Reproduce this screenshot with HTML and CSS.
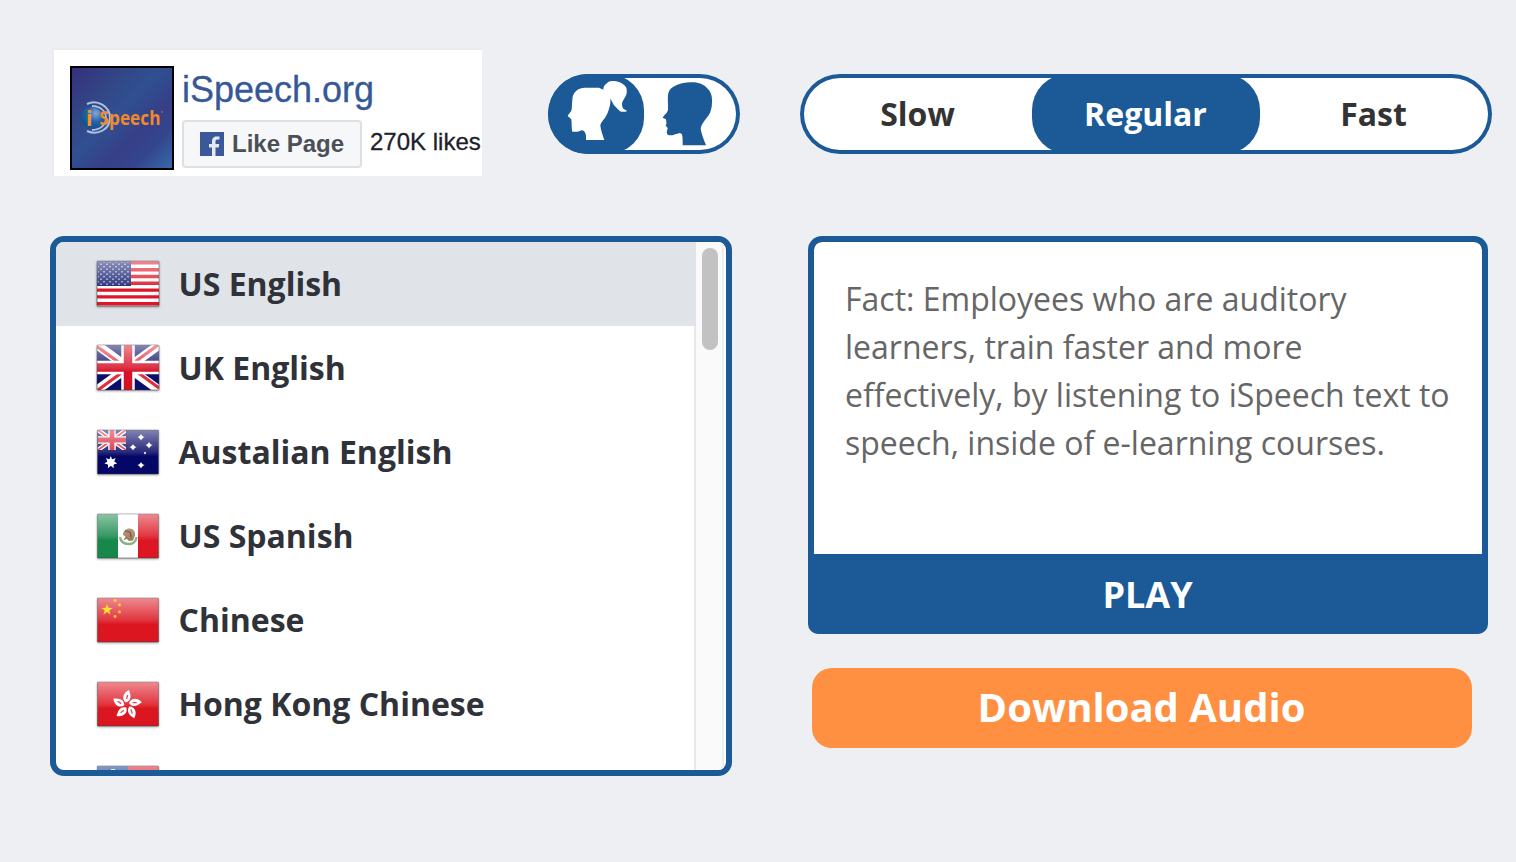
FILE: index.html
```html
<!DOCTYPE html>
<html lang="en">
<head>
<meta charset="utf-8">
<title>iSpeech text to speech</title>
<link rel="stylesheet" href="styles.css">
</head>
<body>
<svg class="defs" width="0" height="0" aria-hidden="true">
  <defs>
    <linearGradient id="gloss" x1="0" y1="0" x2="0" y2="1">
      <stop offset="0" stop-color="#fff" stop-opacity=".5"/>
      <stop offset=".5" stop-color="#fff" stop-opacity=".14"/>
      <stop offset=".6" stop-color="#fff" stop-opacity="0"/>
    </linearGradient>
    <pattern id="stars" width="6" height="5" patternUnits="userSpaceOnUse">
      <path d="M1 1h2v1.400h-2zM4 3.500h2v1.400h-2z" fill="#8a90c4"/>
    </pattern>
    <linearGradient id="rim" x1="0" y1="0" x2="0" y2="1">
      <stop offset="0" stop-color="#777" stop-opacity=".45"/>
      <stop offset="1" stop-color="#333" stop-opacity=".5"/>
    </linearGradient>
    <clipPath id="ukClip"><path d="M1 1h62v45H1z"/></clipPath>
    <clipPath id="auClip"><path d="M1.500 2h28.500v20H1.500z"/></clipPath>
    <linearGradient id="logoBg" x1="0" y1="0" x2="1" y2="1">
      <stop offset="0" stop-color="#35307c"/>
      <stop offset=".25" stop-color="#334585"/>
      <stop offset=".45" stop-color="#2f5091"/>
      <stop offset=".65" stop-color="#363f88"/>
      <stop offset=".8" stop-color="#34458d"/>
      <stop offset="1" stop-color="#3569aa"/>
    </linearGradient>
    <radialGradient id="ball" cx=".7" cy=".3" r=".8">
      <stop offset="0" stop-color="#8ba6d2"/>
      <stop offset=".5" stop-color="#1f64a9"/>
      <stop offset="1" stop-color="#124c8e"/>
    </radialGradient>
  </defs>
</svg>
<div class="page">
  <header class="top">
    <section class="like-box">
      <svg class="logo" viewBox="0 0 104 104">
        <rect width="104" height="104" fill="#000"/>
        <rect x="2" y="2" width="100" height="100" fill="url(#logoBg)"/>
        <g fill="none" stroke="#adc0dd" class="soft">
          <path d="M17 38c10-5 23 2 23 14 0 11-12 18-23 13" stroke-width="2"/>
          <path d="M22 40c8 0 14 5 14 12 0 7-6 12-14 12" stroke-width="1.800"/>
        </g>
        <ellipse cx="21.500" cy="51.500" rx="11" ry="10.500" fill="url(#ball)"/>
        <text class="logo-i" x="16" y="59.500">i</text>
        <text class="logo-word" x="29.500" y="59" textLength="61" lengthAdjust="spacingAndGlyphs">Speech</text>
        <circle cx="92" cy="46" r=".9" fill="#a8683f"/>
      </svg>
      <div class="like-info">
        <a class="like-title">iSpeech.org</a>
        <div class="like-row">
          <button class="like-button">
            <svg class="fb" viewBox="0 0 24 24"><path d="M0 0h24v24H0z" fill="#3b5998"/><path d="M12 24V15.500H9V12h3V9.500C12 6 14 4.500 16.500 4.500h3v3h-2c-1.500 0-2 .7-2 2V12h3.800l-.6 3.500h-3.200V24z" fill="#e3e8f3"/></svg>
            <span>Like Page</span>
          </button>
          <span class="like-count">270K likes</span>
        </div>
      </div>
    </section>
    <div class="toggle voice">
      <button class="seg active" aria-label="Female"><svg class="soft" viewBox="0 0 96 80"><path d="M24.300 26c0-4 1.700-7.500 4.400-9.500 2.300-2 5-2.800 8.300-2.800h14l4.300 2c0-2.500 1-4.500 2.700-5.700C60 8 61.500 7 63.700 7c4 0 7.500.5 10 2.300 3 2 5 3.500 5 6.500 0 2.500.3 4-1 6.200l-3.400 6c-.6 2.500-.3 4.700 1 6.700l4 2.300c-2.500 1-5 1.200-7.300.3L66 31.300l-3.700-6.800c.3 3.500 0 6.300-1 9.200-1 4-2.300 7-4.300 10-2 2.700-4.200 5-4.700 7.600.5 5 2.300 9.700 4 14.700H38c0-2 .2-4-.3-5.700-.7-2.700-2-4-4-4l-4 1.400h-5.400c-1-4-.3-8.400-1-12.400l-3.600-3.300c1-2.500 3.600-3.700 4-6.700z" fill="#fff"/></svg></button>
      <button class="seg" aria-label="Male"><svg class="soft" viewBox="0 0 96 80"><path d="M24 21c.5-4 2.300-6.500 5.300-8.300 5-3 12-4.400 18.400-4.400 6 0 11.500 1.700 15 5.400C66.500 17 68 21 68 25.500c.2 5-.3 9.200-2 13.200-3 6-8.500 10-9.300 16 .8 6 3.300 11 5.300 16.600H38.700c-.2-4 .2-7.500-.7-11l-2-1.300-5.500 1.500c-2.300 1-4.300 1-6.200.5-1-.7-1.500-1.700-1.600-3l1-4-2-2.300.8-2.400-.5-4-3.300-1.600c1.300-2.700 4.800-4.700 5.300-8.200.3-5-.5-10 0-14.500z" fill="#1b5a96"/></svg></button>
    </div>
    <div class="toggle speed">
      <button class="seg">Slow</button>
      <button class="seg active">Regular</button>
      <button class="seg">Fast</button>
    </div>
  </header>
  <main class="main">
    <div class="languages">
      <ul class="list">
        <li class="item selected">
          <svg class="flag" viewBox="0 0 64 48"><path d="M1 1h62v45H1z" fill="#fff"/><path d="M1 2.800h62M1 9.700h62M1 16.500h62M1 23.300h62M1 30.100h62M1 36.900h62M1 43.700h62" stroke="#e01527" stroke-width="3.400"/><path d="M1 1h34v25H1z" fill="#1b2473"/><path d="M2 2h32v23H2z" fill="url(#stars)"/><path d="M1 1h62v45H1z" fill="url(#gloss)"/><rect class="rim" x="1" y="1" width="62" height="45" rx="1"/></svg>
          <span>US English</span>
        </li>
        <li class="item">
          <svg class="flag" viewBox="0 0 64 48"><g clip-path="url(#ukClip)"><path d="M1 1h62v45H1z" fill="#0b0f69"/><path d="M1 1l62 45M63 1L1 46" stroke="#fff" stroke-width="9"/><path d="M1 2.500L30 23.500M62 1L34 21.500M2 46l28-20.500M63 44L35 23.500" stroke="#e0303f" stroke-width="3.200"/><path d="M32 1v45M1 23.500h62" stroke="#fff" stroke-width="13.500"/><path d="M32 1v45M1 23.500h62" stroke="#d61228" stroke-width="8.500"/><path d="M1 1h62v45H1z" fill="url(#gloss)"/></g><rect class="rim" x="1" y="1" width="62" height="45" rx="1"/></svg>
          <span>UK English</span>
        </li>
        <li class="item">
          <svg class="flag" viewBox="0 0 64 48"><path d="M1.500 2h61v44h-61z" fill="#050767"/><g clip-path="url(#auClip)"><path d="M2 2l28 20M30 2L2 22" stroke="#fff" stroke-width="4.500"/><path d="M2 2l28 20M30 2L2 22" stroke="#dc2638" stroke-width="1.800"/><path d="M16 2v20M2 12h28" stroke="#fff" stroke-width="7.500"/><path d="M16 2v20M2 12h28" stroke="#d81f34" stroke-width="4.800"/></g><g fill="#fff"><path d="M14.800 28l1.400 3.400 3.500-1.300-1.500 3.300 3 2.100-3.700.9.200 3.800-2.900-2.400-2.900 2.400.2-3.800-3.700-.9 3-2.100-1.500-3.300 3.500 1.300z"/><circle cx="14.800" cy="34.500" r="3.400"/><path d="M45 6l1.200 2.200 2.500.8-2.500 1.200-1.200 2.200-1.200-2.200-2.500-1.200 2.500-.8zM53 14l1.200 2.200 2.500.8-2.500 1.200-1.200 2.200-1.200-2.200-2.500-1.200 2.500-.8zM37 16l1.200 2.200 2.500.8-2.500 1.200-1.200 2.200-1.200-2.200-2.500-1.200 2.500-.8zM45 34l1.200 2.200 2.500.8-2.500 1.200-1.200 2.200-1.200-2.200-2.500-1.200 2.500-.8z"/><g opacity=".8"><circle cx="45" cy="9.200" r="2"/><circle cx="53" cy="17.200" r="2"/><circle cx="37" cy="19.200" r="2"/><circle cx="45" cy="37.200" r="2"/><circle cx="49" cy="25" r="1.200"/></g></g><path d="M1.500 2h61v44h-61z" fill="url(#gloss)"/><rect class="rim" x="1.500" y="2" width="61" height="44" rx="1"/></svg>
          <span>Austalian English</span>
        </li>
        <li class="item">
          <svg class="flag" viewBox="0 0 64 48"><path d="M1.500 2h61v44h-61z" fill="#fff"/><path d="M1.500 2h20.500v44H1.500z" fill="#16884a"/><path d="M42 2h20.500v44H42z" fill="#dc1622"/><path d="M24 25c1 6 5 7 8.500 7s7.500-2 8-7" fill="none" stroke="#8bb08a" stroke-width="2.500"/><path d="M27 23c0-4 3-6.500 6.500-6.500 4 0 6 3 5.500 7l-2 5-4 .5-2-2-3.500 1 2-3.500z" fill="#9a7650"/><path d="M29 19l5 1 1 5" fill="none" stroke="#5f4127" stroke-width="1.500"/><path d="M1.500 2h61v44h-61z" fill="url(#gloss)"/><rect class="rim" x="1.500" y="2" width="61" height="44" rx="1"/></svg>
          <span>US Spanish</span>
        </li>
        <li class="item">
          <svg class="flag" viewBox="0 0 64 48"><path d="M1.500 2h61v44h-61z" fill="#dc1620"/><path d="M1.500 2h61v44h-61z" fill="url(#gloss)"/><g fill="#ffe22d"><path d="M11 8l1.400 3.700 4.200.2-3.300 2.500 1.200 4-3.500-2.300-3.500 2.300 1.200-4-3.300-2.500 4.200-.2z"/><g opacity=".85"><circle cx="19" cy="4.500" r="1.400"/><circle cx="23.500" cy="9" r="1.400"/><circle cx="23.500" cy="16" r="1.400"/><circle cx="19" cy="20.500" r="1.400"/></g></g><rect class="rim" x="1.500" y="2" width="61" height="44" rx="1"/></svg>
          <span>Chinese</span>
        </li>
        <li class="item">
          <svg class="flag" viewBox="0 0 64 48"><path d="M1.500 2h61v44h-61z" fill="#dc1620"/><path d="M1.500 2h61v44h-61z" fill="url(#gloss)"/><g fill="#fff"><path id="petal" d="M30 22.500c-4.500-3-3.500-9.500 3-12.500 1.500 4.500 3.500 10-3 12.500z"/><use href="#petal" transform="rotate(72 31 25)"/><use href="#petal" transform="rotate(144 31 25)"/><use href="#petal" transform="rotate(216 31 25)"/><use href="#petal" transform="rotate(288 31 25)"/></g><g stroke="#e34a54" stroke-width="1.300"><path id="vein" d="M30.500 19l1.200-4"/><use href="#vein" transform="rotate(72 31 25)"/><use href="#vein" transform="rotate(144 31 25)"/><use href="#vein" transform="rotate(216 31 25)"/><use href="#vein" transform="rotate(288 31 25)"/></g><rect class="rim" x="1.500" y="2" width="61" height="44" rx="1"/></svg>
          <span>Hong Kong Chinese</span>
        </li>
        <li class="item">
          <svg class="flag" viewBox="0 0 64 48"><path d="M1.500 2h30.500v44H1.500z" fill="#0f3590"/><path d="M32 2h30.500v44H32z" fill="#e01020"/><path d="M15 5h4v5h-4z" fill="#d5dcf0"/><path d="M1.500 2h61v44h-61z" fill="url(#gloss)"/><rect class="rim" x="1.500" y="2" width="61" height="44" rx="1"/></svg>
        </li>
      </ul>
      <div class="scrollbar"><div class="thumb"></div></div>
    </div>
    <div class="speech">
      <div class="editor">
        <p class="message">Fact: Employees who are auditory<br>learners, train faster and more<br>effectively, by listening to iSpeech text to<br>speech, inside of e-learning courses.</p>
        <button class="play">PLAY</button>
      </div>
      <button class="download">Download Audio</button>
    </div>
  </main>
</div>
</body>
</html>
```
FILE: styles.css
```css
* { box-sizing: border-box; }
body {
  margin: 0;
  background: #edeff3;
  font-family: "Open Sans", sans-serif;
  overflow: hidden;
}
button {
  border: 0;
  padding: 0;
  background: none;
  font: inherit;
  color: inherit;
}
svg { display: block; }
.defs { position: absolute; }
.soft { filter: blur(.4px); }
.page { height: 862px; padding: 50px 24px 0 50px; }
.top { display: flex; height: 186px; align-items: flex-start; }

.like-box {
  display: flex;
  gap: 8px;
  width: 428px;
  height: 126px;
  margin-left: 4px;
  padding: 16px 0 0 16px;
  background: #fff;
  box-shadow: -1px -1px 0 1px #e9ebee;
  clip-path: inset(-2px 0 0 -2px);
  font-family: "Liberation Sans", Arial, sans-serif;
  white-space: nowrap;
}
.logo { width: 104px; height: 104px; flex: none; }
.logo-i { font: bold 21px "Open Sans", sans-serif; fill: #f7941e; }
.logo-word { font: bold 19px "Open Sans", sans-serif; fill: #f08a2c; }
.like-info { width: 300px; }
.like-title {
  display: block;
  height: 54px;
  line-height: 48px;
  font-size: 36px;
  color: #365899;
  -webkit-text-stroke: .3px #365899;
}
.like-row { display: flex; gap: 8px; }
.like-button {
  display: flex;
  align-items: center;
  gap: 8px;
  width: 180px;
  height: 48px;
  padding-left: 16px;
  border: 2px solid #dddfe2;
  border-radius: 4px;
  background: #f6f7f9;
  color: #4b4f56;
  font-size: 24px;
  font-weight: bold;
}
.fb { width: 24px; height: 24px; }
.like-count {
  line-height: 43px;
  font-size: 24px;
  color: #1d2129;
  -webkit-text-stroke: .3px #1d2129;
}

.toggle {
  display: flex;
  height: 80px;
  margin-top: 24px;
  border-radius: 40px;
  background: #fff;
  box-shadow: inset 0 0 0 4px #1b5a96;
  overflow: hidden;
  color: #333;
  font-size: 32px;
  font-weight: bold;
}
.seg { flex: 1; height: 80px; }
.seg.active {
  background: #1b5a96;
  border-radius: 36px;
  color: #fff;
}
.voice { width: 192px; margin-left: 66px; }
.voice svg { width: 96px; height: 80px; }
.speed { width: 692px; margin-left: 60px; padding: 0 4px; }
.speed .seg { padding: 0 1px 2px 0; }

.main { display: flex; gap: 76px; align-items: flex-start; }
.languages {
  display: flex;
  width: 682px;
  height: 540px;
  border: 6px solid #1b5a96;
  border-radius: 14px;
  background: #fff;
  overflow: hidden;
}
.list { flex: 1; margin: 0; padding: 0; list-style: none; }
.item {
  display: flex;
  align-items: center;
  gap: 18.5px;
  height: 84px;
  padding-left: 40px;
  border-right: 2px solid #e7e7e7;
  color: #2f3238;
  font-size: 32px;
  font-weight: bold;
}
.item span { padding-bottom: 2px; }
.item.selected { background: #e0e3e8; border-color: #e0e3e8; }
.flag {
  width: 64px;
  height: 48px;
  overflow: visible;
  filter: blur(.4px) drop-shadow(0 1px 1px rgba(0, 0, 0, .35));
}
.rim { fill: none; stroke: url(#rim); stroke-width: 1.2; }
.scrollbar {
  width: 28px;
  margin-right: 2px;
  padding: 6px;
  border-right: 2px solid #ededed;
  background: #fafafa;
}
.thumb { width: 16px; height: 102px; border-radius: 8px; background: #c2c2c2; }

.speech { width: 680px; }
.editor {
  height: 398px;
  border: 6px solid #1b5a96;
  border-bottom: 0;
  border-radius: 14px 14px 10px 10px;
  background: #1b5a96;
  overflow: hidden;
}
.message {
  height: 312px;
  margin: 0;
  padding: 33px 0 0 31px;
  border-radius: 8px 8px 0 0;
  background: #fff;
  color: #666;
  font-size: 32px;
  line-height: 48px;
  white-space: nowrap;
}
.play {
  width: 100%;
  height: 80px;
  padding-right: 1px;
  color: #fff;
  font-size: 36px;
  font-weight: bold;
}
.download {
  display: block;
  width: 660px;
  height: 80px;
  margin: 34px 0 0 4px;
  padding: 0 1px 4px 0;
  border-radius: 20px;
  background: #ff8f41;
  color: #fff;
  font-size: 40px;
  font-weight: bold;
}
```
